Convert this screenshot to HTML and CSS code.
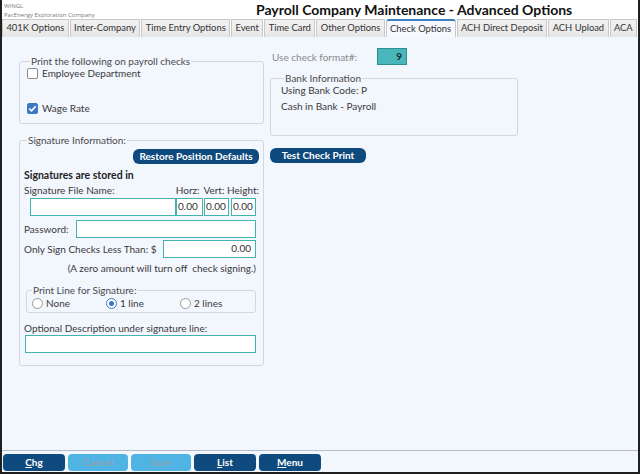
FILE: index.html
```html
<!DOCTYPE html>
<html>
<head>
<meta charset="utf-8">
<link rel="stylesheet" href="styles.css">
</head>
<body>
<div class="window">
  <header class="titlebar">
    <div class="app">
      <div class="app-name">WINGL</div>
      <div class="company">PacEnergy Exploration Company</div>
    </div>
    <div class="title">Payroll Company Maintenance - Advanced Options</div>
  </header>
  <nav class="tabs">
    <span class="tab">401K Options</span>
    <span class="tab">Inter-Company</span>
    <span class="tab">Time Entry Options</span>
    <span class="tab">Event</span>
    <span class="tab">Time Card</span>
    <span class="tab">Other Options</span>
    <span class="tab active">Check Options</span>
    <span class="tab">ACH Direct Deposit</span>
    <span class="tab">ACH Upload</span>
    <span class="tab">ACA</span>
  </nav>
  <main class="content">
    <div class="col-left">
      <fieldset class="group print-group">
        <legend>Print the following on payroll checks</legend>
        <label class="check"><span class="box"></span>Employee Department</label>
        <label class="check"><span class="box checked"><svg width="11" height="11" viewBox="0 0 11 11"><path d="M2.3 5.6 L4.5 7.8 L8.8 3.2" fill="none" stroke="#fff" stroke-width="1.6"/></svg></span>Wage Rate</label>
      </fieldset>
      <fieldset class="group sig-group">
        <legend>Signature Information:</legend>
        <div class="restore-row"><button class="btn pill restore-btn">Restore Position Defaults</button></div>
        <div class="bold-label">Signatures are stored in</div>
        <div class="file-labels">
          <span class="fl-name">Signature File Name:</span>
          <span class="fl-horz">Horz:</span>
          <span class="fl-vert">Vert:</span>
          <span class="fl-height">Height:</span>
        </div>
        <div class="file-inputs">
          <span class="input file-name"></span>
          <span class="input num-horz">0.00</span>
          <span class="input num-vert">0.00</span>
          <span class="input num-height">0.00</span>
        </div>
        <div class="row pw-row">
          <span class="lbl">Password:</span>
          <span class="input pw-input"></span>
        </div>
        <div class="row amt-row">
          <span class="lbl">Only Sign Checks Less Than: $</span>
          <span class="input amt-input">0.00</span>
        </div>
        <div class="note">(A zero amount will turn off&nbsp; check signing.)</div>
        <fieldset class="group line-group">
          <legend>Print Line for Signature:</legend>
          <div class="radios">
            <label class="radio r-none"><span class="circle"></span>None</label>
            <label class="radio r-one"><span class="circle on"></span>1 line</label>
            <label class="radio r-two"><span class="circle"></span>2 lines</label>
          </div>
        </fieldset>
        <div class="desc-label">Optional Description under signature line:</div>
        <span class="input desc-input"></span>
      </fieldset>
    </div>
    <div class="col-right">
      <div class="format-row">
        <span class="format-label">Use check format#:</span>
        <span class="format-box">9</span>
      </div>
      <fieldset class="group bank-group">
        <legend>Bank Information</legend>
        <div class="bank-lines">
          <div class="bank-line">Using Bank Code: P</div>
          <div class="bank-line">Cash in Bank - Payroll</div>
        </div>
      </fieldset>
      <button class="btn pill test-btn">Test Check Print</button>
    </div>
  </main>
  <footer class="footer">
    <button class="fbtn"><u>C</u>hg</button>
    <button class="fbtn disabled">Cancel</button>
    <button class="fbtn disabled">Save</button>
    <button class="fbtn"><u>L</u>ist</button>
    <button class="fbtn"><u>M</u>enu</button>
  </footer>
</div>
</body>
</html>
```
FILE: styles.css
```css
* { box-sizing: border-box; }
html, body { margin: 0; padding: 0; }
body {
  font-family: Lato, "Open Sans", sans-serif;
  font-size: 10px;
  color: #3a3a3a;
}
.window {
  width: 640px;
  height: 474px;
  border-left: 2px solid #1f1f1f;
  border-right: 2px solid #1f1f1f;
  border-bottom: 2px solid #1f1f1f;
  background: #f2f6fd;
  display: flex;
  flex-direction: column;
  overflow: hidden;
}
.titlebar {
  height: 19px;
  background: #fff;
  display: flex;
  align-items: center;
  flex: none;
}
.app {
  width: 254px;
  padding-left: 2px;
  color: #7a7a7a;
  line-height: 8px;
  font-family: "Open Sans", sans-serif;
  font-size: 6px;
  padding-top: 1px;
}
.company { margin-top: 1px; }
.title {
  font-weight: bold;
  font-size: 14px;
  color: #111;
}
.tabs {
  height: 18px;
  display: flex;
  background: #fff;
  flex: none;
  gap: 1px;
}
.tab {
  height: 18px;
  border: 1px solid #c8c8c8;
  border-bottom: none;
  background: linear-gradient(#f2f2f2, #e6e6e6);
  padding: 0 3.4px;
  font-size: 9.4px;
  line-height: 16px;
  color: #333;
  white-space: nowrap;
}
.tab.active {
  background: #f6f9fd;
  border-top: 2px solid #3f7fc4;
  border-radius: 3px 3px 0 0;
  line-height: 15px;
}
.content {
  flex: 1;
  display: flex;
  gap: 6px;
  padding-left: 17px;
  padding-top: 11px;
}
.col-left { width: 245px; display: flex; flex-direction: column; padding-top: 7px; }
.col-right { width: 248px; display: flex; flex-direction: column; align-items: flex-start; }

.group {
  margin: 0;
  min-width: 0;
  border: 1px solid #d2d7de;
  border-radius: 3px;
  padding: 0;
}
.group legend {
  padding: 0 1px;
  margin-left: 3px;
  color: #4a4a4a;
  line-height: 12px;
}
.print-group { height: 69px; padding: 0 0 0 7px; }
.check {
  display: flex;
  align-items: center;
  height: 14px;
  margin-top: -1px;
  color: #3a3a3a;
}
.check + .check { margin-top: 21px; }
.box {
  width: 11px; height: 11px;
  border: 1px solid #8a8a8a;
  border-radius: 2px;
  background: #fff;
  margin-right: 4px;
  display: inline-flex;
}
.box.checked { background: #3c79c4; border-color: #3c79c4; }
.box.checked svg { margin: -1px; }

.sig-group { margin-top: 10px; height: 232px; padding: 0 4px; }
.restore-row { display: flex; justify-content: flex-end; margin-top: 3px; }
.btn {
  font-family: inherit;
  font-weight: bold;
  font-size: 10px;
  color: #fff;
  background: #0f4a7e;
  border: none;
  height: 15px;
  line-height: 15px;
  padding: 0;
  cursor: default;
}
.pill { border-radius: 6px; }
.restore-btn { width: 126px; }
.bold-label { font-weight: bold; color: #222; margin-top: 4px; line-height: 14px; font-size: 10.5px; }
.file-labels {
  display: flex;
  margin-top: 1px;
  line-height: 14px;
}
.fl-name { width: 154px; }
.fl-horz { width: 28px; }
.fl-vert { width: 24px; }
.input {
  display: block;
  height: 18px;
  border: 1.5px solid #44b2ae;
  background: #fff;
  color: #333;
  line-height: 15px;
  padding: 0 1px;
}
.file-inputs { display: flex; margin-top: 1px; }
.file-name { width: 146px; margin-left: 6px; }
.num-horz { width: 27px; margin-left: 0; }
.num-vert { width: 25px; margin-left: 1px; }
.num-height { width: 25px; margin-left: 2px; }
.row { display: flex; align-items: center; justify-content: space-between; margin-right: 3px; }
.pw-row { margin-top: 4px; }
.pw-input { width: 180px; }
.amt-row { margin-top: 2px; }
.amt-input { width: 93px; text-align: right; padding-right: 4px; }
.note { text-align: right; margin: 3px 3px 0 0; line-height: 14px; }
.line-group { margin: 9px 0 0 2px; width: 230px; height: 29px; padding: 0 0 0 5px; }
.line-group legend { margin-left: 0; }
.radios { display: flex; margin-top: 0; }
.radio { display: flex; align-items: center; height: 14px; }
.r-none { width: 74px; }
.r-one { width: 74px; }
.circle {
  width: 11px; height: 11px;
  border: 1px solid #9a9a9a;
  border-radius: 50%;
  background: #fff;
  margin-right: 3px;
  display: inline-block;
  position: relative;
}
.circle.on { border-color: #3c79c4; }
.circle.on::after {
  content: "";
  position: absolute;
  left: 2px; top: 2px;
  width: 5px; height: 5px;
  border-radius: 50%;
  background: #3c79c4;
}
.desc-label { margin-top: 8px; line-height: 14px; }
.desc-input { width: 231px; margin-left: 1px; }

.format-row { display: flex; align-items: center; height: 17px; }
.format-label { color: #8a8a8a; width: 107px; padding-left: 2px; }
.format-box {
  width: 30px; height: 17px;
  background: #49b6b9;
  border: 1.5px solid #2d8f92;
  font-weight: bold;
  color: #1b2a33;
  text-align: right;
  padding-right: 4px;
  line-height: 14px;
}
.bank-group { margin-top: 7px; width: 248px; height: 64px; padding: 0 0 0 10px; }
.bank-lines { margin-top: -2px; }
.bank-line { line-height: 16px; }
.test-btn { margin-top: 12px; width: 96px; }

.footer {
  flex: none;
  height: 22px;
  border-top: 1px solid #b8bcc2;
  display: flex;
  gap: 3px;
  padding: 3px 0 0 1px;
}
.fbtn {
  width: 62px;
  height: 17px;
  border: none;
  border-radius: 4px;
  background: #0f4a7e;
  color: #fff;
  font-family: inherit;
  font-weight: bold;
  font-size: 10px;
  line-height: 17px;
  padding: 0;
}
.fbtn.disabled { background: #4fb4e4; color: #8aa3b3; width: 60px; }
```
